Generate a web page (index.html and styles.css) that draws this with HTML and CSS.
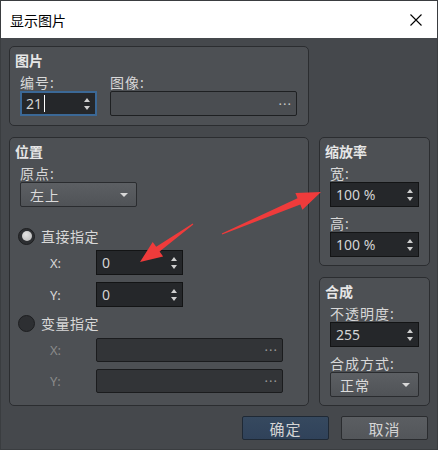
FILE: index.html
```html
<!DOCTYPE html>
<html lang="zh">
<head>
    <meta charset="UTF-8">
    <title>显示图片</title>
    <link rel="stylesheet" href="styles.css">
</head>
<body>
<div class="window">
    <div class="titlebar">
        <span class="title">显示图片</span>
        <svg class="close" width="12" height="12" viewBox="0 0 12 12">
            <path d="M0.5 0.5L11.5 11.5M11.5 0.5L0.5 11.5" stroke="#000" stroke-width="1.1" fill="none"/>
        </svg>
    </div>

    <div class="content">
        <div class="groups">
            <div class="group pic">
                <div class="group-title">图片</div>
                <div class="pic-row">
                    <div class="field num">
                        <div class="label">编号:</div>
                        <div class="spin focus"><span class="val">21</span><span class="caret"></span><span class="arrows"></span></div>
                    </div>
                    <div class="field img">
                        <div class="label">图像:</div>
                        <div class="browse"><span class="dots">···</span></div>
                    </div>
                </div>
            </div>

            <div class="group pos">
                <div class="group-title">位置</div>
                <div class="label">原点:</div>
                <div class="combo origin"><span>左上</span><span class="down"></span></div>

                <div class="radio-row direct"><span class="radio on"></span><span class="radio-text">直接指定</span></div>
                <div class="coord first">
                    <span class="coord-label">X:</span>
                    <div class="spin small"><span class="val">0</span><span class="arrows"></span></div>
                </div>
                <div class="coord second">
                    <span class="coord-label">Y:</span>
                    <div class="spin small"><span class="val">0</span><span class="arrows"></span></div>
                </div>

                <div class="radio-row var"><span class="radio"></span><span class="radio-text">变量指定</span></div>
                <div class="coord third">
                    <span class="coord-label off">X:</span>
                    <div class="browse off"><span class="dots">···</span></div>
                </div>
                <div class="coord fourth">
                    <span class="coord-label off">Y:</span>
                    <div class="browse off"><span class="dots">···</span></div>
                </div>
            </div>

            <div class="side">
                <div class="group">
                    <div class="group-title">缩放率</div>
                    <div class="label">宽:</div>
                    <div class="spin"><span class="val">100 %</span><span class="arrows"></span></div>
                    <div class="label gap">高:</div>
                    <div class="spin"><span class="val">100 %</span><span class="arrows"></span></div>
                </div>
                <div class="group">
                    <div class="group-title">合成</div>
                    <div class="label">不透明度:</div>
                    <div class="spin"><span class="val">255</span><span class="arrows"></span></div>
                    <div class="label gap">合成方式:</div>
                    <div class="combo blend"><span>正常</span><span class="down"></span></div>
                </div>
            </div>
        </div>

        <div class="footer">
            <button class="btn ok">确定</button>
            <button class="btn">取消</button>
        </div>
    </div>

    <!-- annotation arrows drawn over the dialog -->
    <svg class="marks" width="438" height="450" viewBox="0 0 438 450">
        <polygon points="192.7,223.6 156.2,246.8 152.7,241.9 140,262 163.1,256.5 159.6,251.6 193.3,224.4" fill="#ef3b3b"/>
        <polygon points="221.8,233.5 297.5,198.2 295.4,193.1 321,192 302.4,209.7 300.3,204.6 222.2,234.6" fill="#ef3b3b"/>
    </svg>
</div>
</body>
</html>
```

FILE: styles.css
```css
body {
    margin: 0;
    background: #ffffff;
    font-family: "Noto Sans", "Noto Sans CJK SC", sans-serif;
}
.window {
    width: 438px;
    height: 450px;
    box-sizing: border-box;
    border: 1px solid #3a3d40;
    background: #45484c;
    display: flex;
    flex-direction: column;
    position: relative;
}
.titlebar {
    height: 37px;
    flex-shrink: 0;
    background: #ffffff;
    display: flex;
    align-items: center;
    justify-content: space-between;
    padding: 0 15px 0 9px;
}
.title {
    font-size: 14px;
    color: #000000;
}
.content {
    padding: 8px 0 0 8px;
}
.groups {
    display: grid;
    grid-template-columns: 300px 111px;
    grid-template-rows: 80px 269px;
    column-gap: 10px;
    row-gap: 11px;
}
.group {
    box-sizing: border-box;
    border: 1px solid #2b2d30;
    border-radius: 5px;
    background: #4d5054;
    padding: 5px 10px 7px 10px;
    display: flex;
    flex-direction: column;
    color: #d8d8d8;
    font-size: 14px;
}
.group-title {
    font-weight: bold;
    color: #e6e6e6;
    line-height: 18px;
    margin-left: -5px;
    margin-bottom: 4px;
}
.label {
    line-height: 17px;
    height: 17px;
    letter-spacing: 1px;
}
.label.gap {
    margin-top: 8px;
}
.pic {
    grid-column: 1;
    grid-row: 1;
}
.pos {
    grid-column: 1;
    grid-row: 2;
}
.side {
    grid-column: 2;
    grid-row: 2;
    display: flex;
    flex-direction: column;
    gap: 11px;
}
.side .group {
    flex: 1;
}
.pic-row {
    display: flex;
    gap: 13px;
}
.num {
    width: 77px;
}
.img {
    width: 187px;
}

/* inputs */
.spin {
    height: 25px;
    box-sizing: border-box;
    background: #25272a;
    border: 1px solid #131415;
    display: flex;
    align-items: center;
    padding-left: 5px;
    position: relative;
    font-size: 14px;
    color: #d4d4d4;
}
.spin.focus {
    border: 2px solid #3b6896;
    padding-left: 4px;
}
.spin.small {
    width: 87px;
}
.caret {
    width: 1px;
    height: 17px;
    background: #ffffff;
    margin-left: 2px;
}
.arrows {
    position: absolute;
    right: 4px;
    top: 50%;
    width: 7px;
    height: 14px;
    margin-top: -7px;
}
.arrows::before, .arrows::after {
    content: "";
    position: absolute;
    left: 0;
    border-left: 3.5px solid transparent;
    border-right: 3.5px solid transparent;
}
.arrows::before {
    top: 1px;
    border-bottom: 4px solid #d0d0d0;
}
.arrows::after {
    bottom: 1px;
    border-top: 4px solid #d0d0d0;
}
.browse {
    height: 25px;
    box-sizing: border-box;
    background: #4a4d51;
    border: 1px solid #1e2022;
    border-radius: 2px;
    display: flex;
    align-items: center;
    justify-content: flex-end;
    padding-right: 4px;
}
.browse.off {
    width: 187px;
    height: 24px;
    background: #323437;
    border-color: #1b1c1e;
}
.dots {
    color: #c8c8c8;
    font-size: 13px;
    letter-spacing: 1px;
}
.browse.off .dots {
    color: #9a9a9a;
}
.combo {
    height: 25px;
    box-sizing: border-box;
    background: linear-gradient(#5c5f63, #505357);
    border: 1px solid #2a2c2f;
    border-radius: 2px;
    display: flex;
    align-items: center;
    justify-content: space-between;
    padding: 0 8px 0 9px;
    font-size: 14px;
    color: #dcdcdc;
    letter-spacing: 1px;
}
.combo.origin {
    width: 117px;
}
.down {
    border-left: 4px solid transparent;
    border-right: 4px solid transparent;
    border-top: 4px solid #d8d8d8;
}

/* position group rows */
.radio-row {
    display: flex;
    align-items: center;
    height: 20px;
    margin-left: -2px;
    letter-spacing: 0.5px;
}
.radio-row.direct {
    margin-top: 19px;
}
.radio-row.var {
    margin-top: 6px;
}
.radio {
    width: 17px;
    height: 17px;
    box-sizing: border-box;
    border-radius: 50%;
    background: #2d2f32;
    border: 1px solid #1d1e20;
    margin-right: 6px;
    display: flex;
    align-items: center;
    justify-content: center;
}
.radio.on::after {
    content: "";
    width: 10px;
    height: 10px;
    border-radius: 50%;
    background: radial-gradient(circle at 40% 35%, #e4e4e4, #b4b4b4);
}
.coord {
    display: flex;
    align-items: center;
    padding-left: 30px;
}
.coord-label {
    width: 46px;
    font-size: 13px;
    color: #d8d8d8;
}
.coord-label.off {
    color: #8a8a8a;
}
.coord.first {
    margin-top: 4px;
}
.coord.second {
    margin-top: 7px;
}
.coord.third {
    margin-top: 5px;
}
.coord.fourth {
    margin-top: 7px;
}

/* buttons */
.footer {
    display: flex;
    justify-content: flex-end;
    gap: 12px;
    margin-top: 10px;
    padding-right: 9px;
}
.btn {
    width: 87px;
    height: 24px;
    box-sizing: border-box;
    border: 1px solid #2a2c2f;
    border-radius: 2px;
    background: linear-gradient(#5b5e62, #53565a);
    color: #d4d4d4;
    font-family: "Noto Sans", "Noto Sans CJK SC", sans-serif;
    font-size: 15px;
    letter-spacing: 1px;
    padding: 0;
}
.btn.ok {
    background: linear-gradient(#36495f, #30425a);
    border-color: #1f2935;
}
.marks {
    position: absolute;
    left: -1px;
    top: -1px;
    pointer-events: none;
}
```
